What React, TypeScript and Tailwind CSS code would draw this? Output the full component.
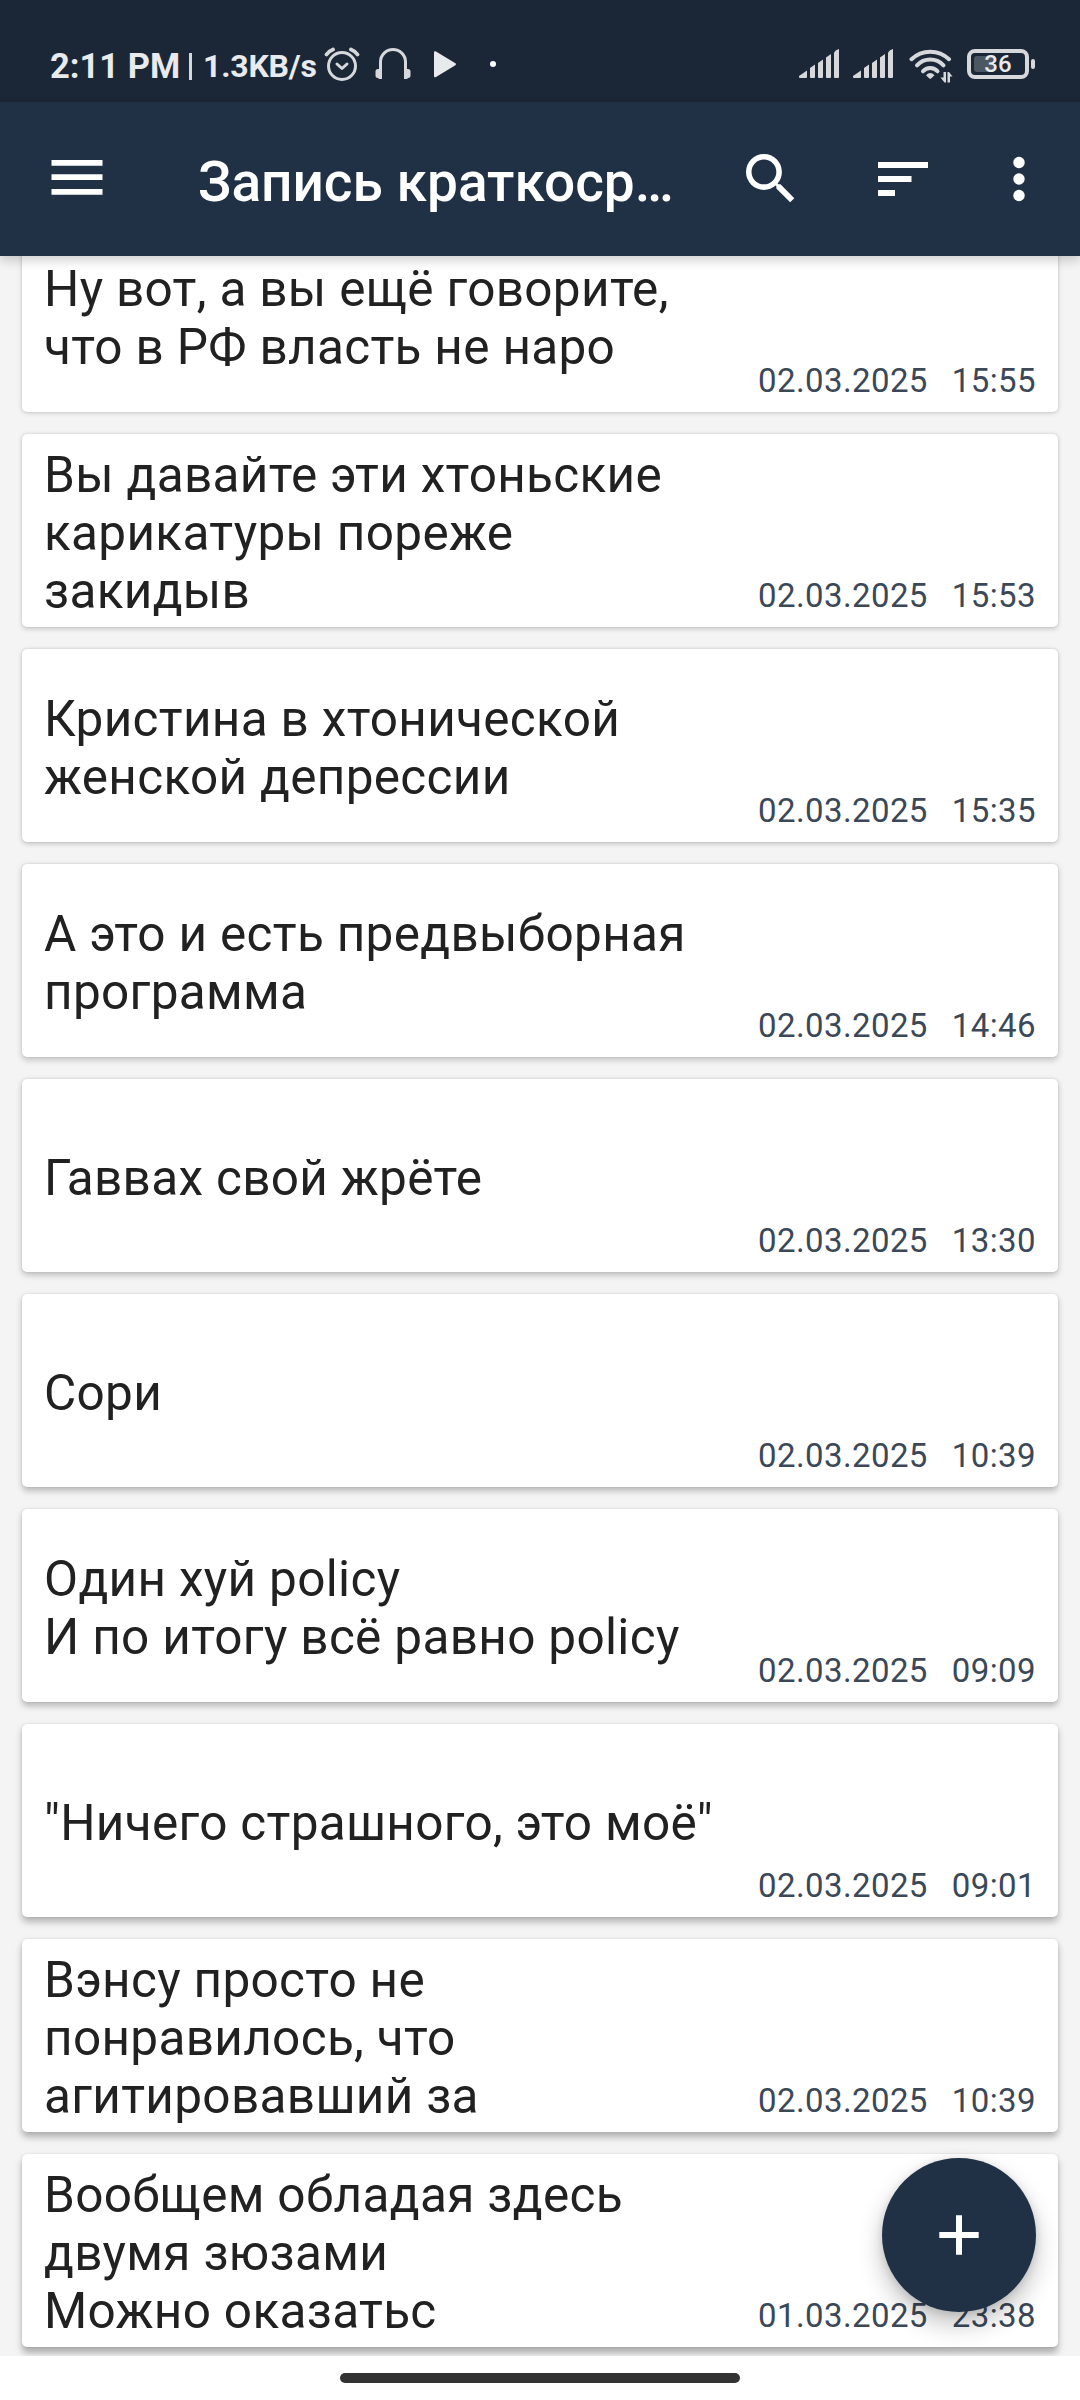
import { useState } from "react";

type Note = {
    id: number;
    lines: string[];
    date: string;
    time: string;
};

const notes: Note[] = [
    { id: 1, lines: ["Ну вот, а вы ещё говорите,", "что в РФ власть не наро"], date: "02.03.2025", time: "15:55" },
    { id: 2, lines: ["Вы давайте эти хтоньские", "карикатуры пореже", "закидыв"], date: "02.03.2025", time: "15:53" },
    { id: 3, lines: ["Кристина в хтонической", "женской депрессии"], date: "02.03.2025", time: "15:35" },
    { id: 4, lines: ["А это и есть предвыборная", "программа"], date: "02.03.2025", time: "14:46" },
    { id: 5, lines: ["Гаввах свой жрёте"], date: "02.03.2025", time: "13:30" },
    { id: 6, lines: ["Сори"], date: "02.03.2025", time: "10:39" },
    { id: 7, lines: ["Один хуй policy", "И по итогу всё равно policy"], date: "02.03.2025", time: "09:09" },
    { id: 8, lines: ["\"Ничего страшного, это моё\""], date: "02.03.2025", time: "09:01" },
    { id: 9, lines: ["Вэнсу просто не", "понравилось, что", "агитировавший за"], date: "02.03.2025", time: "10:39" },
    { id: 10, lines: ["Вообщем обладая здесь", "двумя зюзами", "Можно оказатьс"], date: "01.03.2025", time: "23:38" },
];

const Signal = () => (
    <svg width="41" height="30" viewBox="0 0 41 30" fill="#d6d8dc">
        <path d="M0 27 8 21.500V28a1 1 0 0 1-1 1H1a1 1 0 0 1-1-1z" />
        <path d="M11 19 16 15.500V28a1 1 0 0 1-1 1H12a1 1 0 0 1-1-1z" />
        <path d="M19 14 24 10.500V28a1 1 0 0 1-1 1H20a1 1 0 0 1-1-1z" />
        <path d="M27 8.500 32 5V28a1 1 0 0 1-1 1H28a1 1 0 0 1-1-1z" />
        <path d="M35 4Q36 1 40 0V28a1 1 0 0 1-1 1H36a1 1 0 0 1-1-1z" />
    </svg>
);

const StatusBar = () => (
    <div className="flex h-[102px] items-start bg-[#1b2736] pt-[46px] pr-[45px] pl-[50px] text-[#e8eaed]">
        <div className="flex h-[40px] w-[268px] items-center whitespace-nowrap">
            <span className="w-[137px] text-[34.5px] leading-[40px] font-bold">2:11 PM</span>
            <span className="mt-[7px] mr-[11px] ml-[2px] h-[27px] w-[3px] self-start bg-[#d6d8dc]"></span>
            <span className="text-[32px] leading-[40px] font-bold tracking-[-0.2px]">1.3KB/s</span>
        </div>
        <svg className="ml-[6px]" width="36" height="40" viewBox="0 0 36 40" fill="none" stroke="#d6d8dc" strokeWidth="3" strokeLinecap="round" strokeLinejoin="round">
            <circle cx="18" cy="20" r="13.500" />
            <path d="M13 18l5 4.500 5-4.500" />
            <path d="M2.500 8.500Q5 5 9 3.500M33.500 8.500Q31 5 27 3.500" strokeWidth="3.800" />
        </svg>
        <svg className="ml-[15px]" width="36" height="40" viewBox="0 0 36 40" fill="none" stroke="#d6d8dc" strokeWidth="3">
            <path d="M5.500 33V16a12.500 12.500 0 0 1 25 0V33" />
            <path d="M7 23H3a2.500 2.500 0 0 0-2.500 2.500v4A2.500 2.500 0 0 0 3 32l1 1h3zM29 23h4a2.500 2.500 0 0 1 2.500 2.500v4A2.500 2.500 0 0 1 33 32l-1 1h-3z" fill="#d6d8dc" stroke="none" />
        </svg>
        <svg className="ml-[22px]" width="26" height="40" viewBox="0 0 26 40" fill="#e8eaed">
            <path d="M1 6.500Q1 4.500 3 5.500L22 17q2 1.200 0 2.500L3 31q-2 1-2-1z" />
        </svg>
        <span className="mt-[15px] ml-[31px] size-[6px] rounded-full bg-white"></span>
        <div className="ml-auto flex items-start pt-[3px]">
            <Signal />
            <span className="w-[13px]"></span>
            <Signal />
            <svg className="ml-[15px]" width="44" height="36" viewBox="0 0 44 36" fill="none" stroke="#d6d8dc" strokeWidth="4" strokeLinecap="round">
                <path d="M2.500 10.200a27 27 0 0 1 37.500 0" />
                <path d="M8 16.300a18 18 0 0 1 26.500 0" />
                <path d="M14 22.300a9.500 9.500 0 0 1 14.500 0" />
                <path d="M17 26.200q4.250-4.400 8.500 0l-3.400 3.300q-.85.7-1.700 0z" fill="#d6d8dc" stroke="none" />
                <path d="M34.500 23H37V33.500h-1.500L31.500 28.500h3zM38.500 33.500V23H40L43.500 27.500H41V33.500z" fill="#d6d8dc" stroke="none" />
            </svg>
            <div className="ml-[14px] flex items-center">
                <div className="relative flex h-[30px] w-[62px] items-center justify-center rounded-[8px] border-[4px] border-[#d6d8dc]">
                    <span className="absolute top-[3px] left-[3px] h-[16px] w-[19px] rounded-[3px] bg-[#4c5764]"></span>
                    <span className="relative text-[24px] leading-[24px] font-medium">36</span>
                </div>
                <span className="ml-[2px] h-[10px] w-[4px] rounded-[2px] bg-[#d6d8dc]"></span>
            </div>
        </div>
    </div>
);

const Toolbar = () => (
    <div className="relative z-10 flex h-[154px] shrink-0 items-center bg-[#213145] text-white shadow-[0_4px_11px_rgba(0,0,0,0.2)]">
        <button className="ml-[51px]">
            <svg width="52" height="38" viewBox="0 0 52 38" fill="currentColor">
                <path d="M.5 0h51v5.700H.5zM.5 14.300h51v5.700H.5zM.5 29h51v5.700H.5z" />
            </svg>
        </button>
        <h1 className="ml-[95px] w-[500px] pt-[6px] text-[55px] leading-[64px] font-medium whitespace-nowrap">Запись краткоср…</h1>
        <button className="ml-[48px]">
            <svg width="49" height="50" viewBox="0 0 49 50">
                <path transform="scale(2.760) translate(-3 -3)" fill="currentColor" d="M15.500 14h-.79l-.28-.27A6.471 6.471 0 0 0 16 9.500 6.500 6.500 0 1 0 9.500 16c1.610 0 3.090-.59 4.230-1.570l.27.28v.79l5 4.990L20.490 19l-4.990-5zm-6 0C7.010 14 5 11.990 5 9.500S7.010 5 9.500 5 14 7.010 14 9.500 11.990 14 9.500 14z" />
            </svg>
        </button>
        <button className="ml-[83px]">
            <svg width="50" height="34" viewBox="0 0 50 34" fill="currentColor">
                <path d="M0 0h50v6H0zM0 14h33.500v6H0zM0 28h17v6H0z" />
            </svg>
        </button>
        <button className="ml-[85px]">
            <svg width="12" height="46" viewBox="0 0 12 46" fill="currentColor">
                <circle cx="6" cy="6.500" r="5.700" />
                <circle cx="6" cy="23" r="5.700" />
                <circle cx="6" cy="39.500" r="5.700" />
            </svg>
        </button>
    </div>
);

const App = () => {
    const [items] = useState(notes);

    // shadows get deeper towards the bottom of the screen
    const cardShadow = (index: number) => {
        const y = 1 + index * 0.45;
        return `0 ${y}px ${5 + index * 0.3}px rgba(0,0,0,${0.17 + index * 0.014}), 0 0 2px rgba(0,0,0,0.12)`;
    };

    return (
        <div className="relative flex h-[2400px] w-[1080px] flex-col overflow-hidden bg-white font-[Roboto,'Noto_Sans',sans-serif]">
            <StatusBar />
            <Toolbar />
            <div className="h-[2100px] overflow-hidden bg-[#f4f4f4]">
                <ul className="-mt-[37px] flex flex-col gap-[22px] px-[22px]">
                    {
                        items.map((note, index) => {
                            return (
                                <li
                                    key={note.id}
                                    className="flex h-[193px] shrink-0 justify-between rounded-[5px] bg-white pr-[22px] pl-[22px]"
                                    style={{ boxShadow: cardShadow(index) }}
                                >
                                    <div className="flex flex-col justify-center pt-[5px] text-[49.5px] leading-[58px] tracking-[0.32px] whitespace-nowrap text-[#212121]">
                                        {note.lines.map((line) => <p key={line}>{line}</p>)}
                                    </div>
                                    <div className="flex gap-[24px] self-end pb-[12px] text-[33px] leading-[39px] tracking-[0.4px] whitespace-nowrap text-[#3b4858]">
                                        <span>{note.date}</span>
                                        <span>{note.time}</span>
                                    </div>
                                </li>
                            )
                        })
                    }
                </ul>
            </div>
            <div className="flex h-[44px] items-center justify-center">
                <span className="h-[10px] w-[400px] rounded-full bg-[#333333]"></span>
            </div>
            <button className="absolute top-[2158px] left-[882px] z-20 flex size-[154px] items-center justify-center rounded-full bg-[#213145] text-white shadow-[0_12px_24px_rgba(0,0,0,0.24),0_2px_8px_rgba(0,0,0,0.12)]">
                <svg width="40" height="40" viewBox="0 0 40 40" fill="currentColor">
                    <path d="M17 .3h6V17H39.700v6H23V39.700h-6V23H.3v-6H17z" />
                </svg>
            </button>
        </div>
    );
}
export default App;
